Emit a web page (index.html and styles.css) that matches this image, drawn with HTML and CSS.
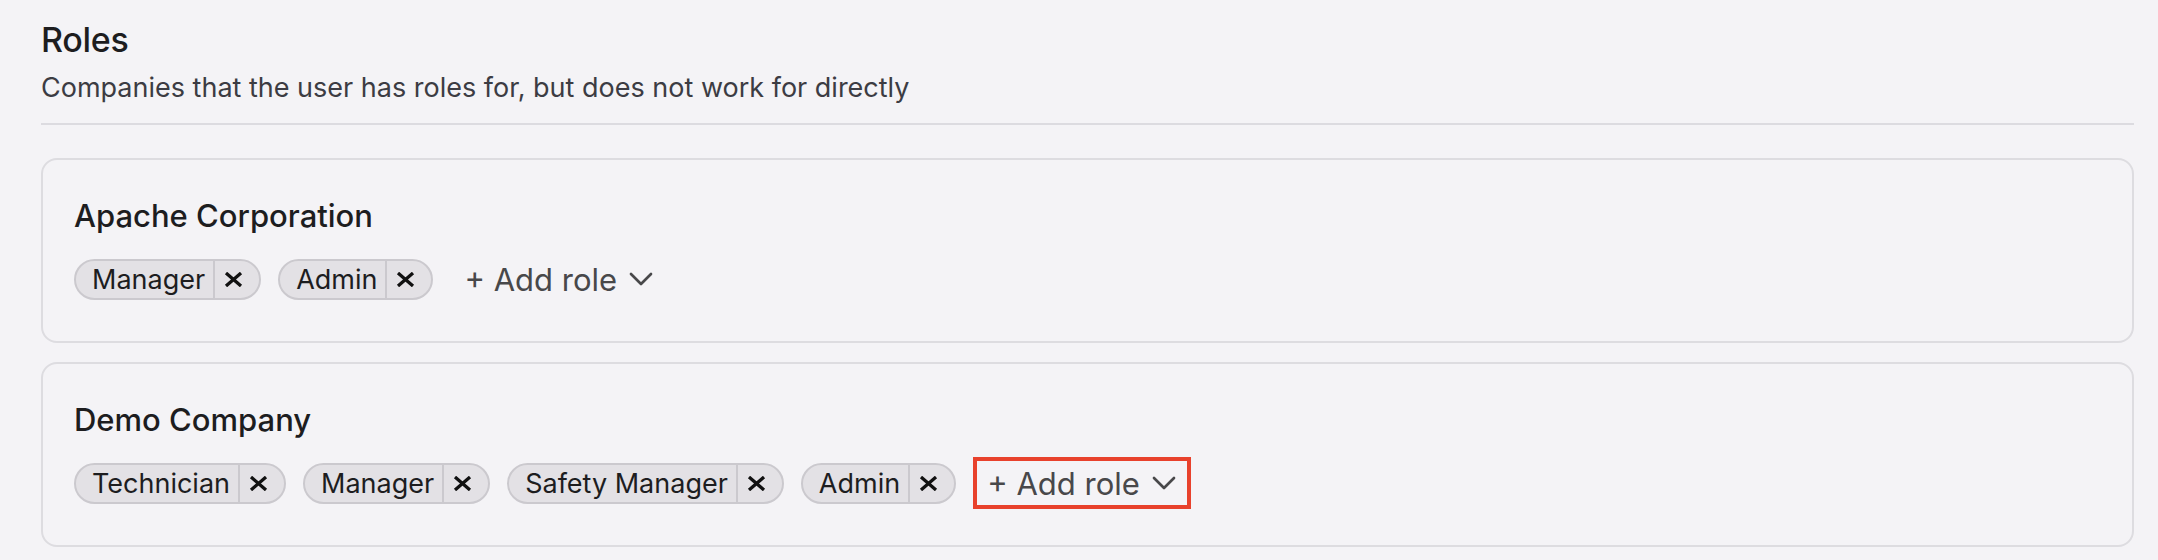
FILE: index.html
```html
<!DOCTYPE html>
<html lang="en">
<head>
<meta charset="utf-8">
<title>Roles</title>
<link rel="stylesheet" href="styles.css">
</head>
<body>
<main class="page">
  <header class="section-head">
    <h1 class="title">Roles</h1>
    <p class="subtitle">Companies that the user has roles for, but does not work for directly</p>
  </header>
  <div class="cards">
    <section class="card">
      <h2 class="company">Apache Corporation</h2>
      <div class="roles">
        <span class="chip"><span class="chip-label">Manager</span><button class="chip-remove" aria-label="Remove Manager"><svg viewBox="0 0 19 15" class="x"><path d="M2 1L17 14M17 1L2 14"/></svg></button></span>
        <span class="chip"><span class="chip-label">Admin</span><button class="chip-remove" aria-label="Remove Admin"><svg viewBox="0 0 19 15" class="x"><path d="M2 1L17 14M17 1L2 14"/></svg></button></span>
        <button class="add-role">+ Add role <svg viewBox="0 0 24 14" class="chev"><path d="M2 2L12 12L22 2"/></svg></button>
      </div>
    </section>
    <section class="card">
      <h2 class="company">Demo Company</h2>
      <div class="roles">
        <span class="chip"><span class="chip-label">Technician</span><button class="chip-remove" aria-label="Remove Technician"><svg viewBox="0 0 19 15" class="x"><path d="M2 1L17 14M17 1L2 14"/></svg></button></span>
        <span class="chip"><span class="chip-label">Manager</span><button class="chip-remove" aria-label="Remove Manager"><svg viewBox="0 0 19 15" class="x"><path d="M2 1L17 14M17 1L2 14"/></svg></button></span>
        <span class="chip"><span class="chip-label">Safety Manager</span><button class="chip-remove" aria-label="Remove Safety Manager"><svg viewBox="0 0 19 15" class="x"><path d="M2 1L17 14M17 1L2 14"/></svg></button></span>
        <span class="chip"><span class="chip-label">Admin</span><button class="chip-remove" aria-label="Remove Admin"><svg viewBox="0 0 19 15" class="x"><path d="M2 1L17 14M17 1L2 14"/></svg></button></span>
        <button class="add-role is-highlighted">+ Add role <svg viewBox="0 0 24 14" class="chev"><path d="M2 2L12 12L22 2"/></svg></button>
      </div>
    </section>
  </div>
</main>
</body>
</html>
```
FILE: styles.css
```css
* { box-sizing: border-box; }
html, body { margin: 0; background: #f4f3f6; }
body { font-family: Inter, "Noto Sans", "Liberation Sans", sans-serif; color: #1d1d1f; }

.page { padding: 20px 24px 0 41px; }

.section-head { border-bottom: 2px solid #dcdbe0; padding-bottom: 19px; }
.title { margin: 0; font-size: 34px; line-height: 40px; font-weight: 500; letter-spacing: -0.3px; }
.subtitle { margin: 12px 0 0; font-size: 27px; line-height: 32px; color: #3c3c43; font-weight: 400; }

.cards { display: flex; flex-direction: column; gap: 19px; margin-top: 33px; }

.card { border: 2px solid #dddce0; border-radius: 16px; padding: 38px 31px 37px; }
.company { margin: 0; font-size: 31px; line-height: 36px; font-weight: 500; }

.roles { display: flex; align-items: center; gap: 17px; margin-top: 20px; height: 50px; }

.chip { display: inline-flex; align-items: stretch; height: 41px; border: 2px solid #cbc9ce; border-radius: 999px; background: #e3e1e5; overflow: hidden; }
.chip-label { display: flex; align-items: center; padding: 0 8px 0 16px; font-size: 27px; color: #1d1d1f; }
.chip-remove { display: flex; align-items: center; border: 0; border-left: 2px solid #cbc9ce; background: transparent; padding: 0 16px 0 9px; margin: 0; cursor: pointer; }
.x { width: 19px; height: 15px; fill: none; stroke: #111; stroke-width: 3.3; }

.add-role { display: inline-flex; align-items: center; gap: 12px; height: 52px; border: 4.5px solid transparent; background: transparent; padding: 0 11px 0 10px; font-family: inherit; font-size: 31px; color: #48484a; cursor: pointer; }
.add-role.is-highlighted { border-color: #e8412c; }
.chev { width: 24px; height: 14px; fill: none; stroke: #48484a; stroke-width: 2.7; stroke-linecap: round; stroke-linejoin: round; }
```
